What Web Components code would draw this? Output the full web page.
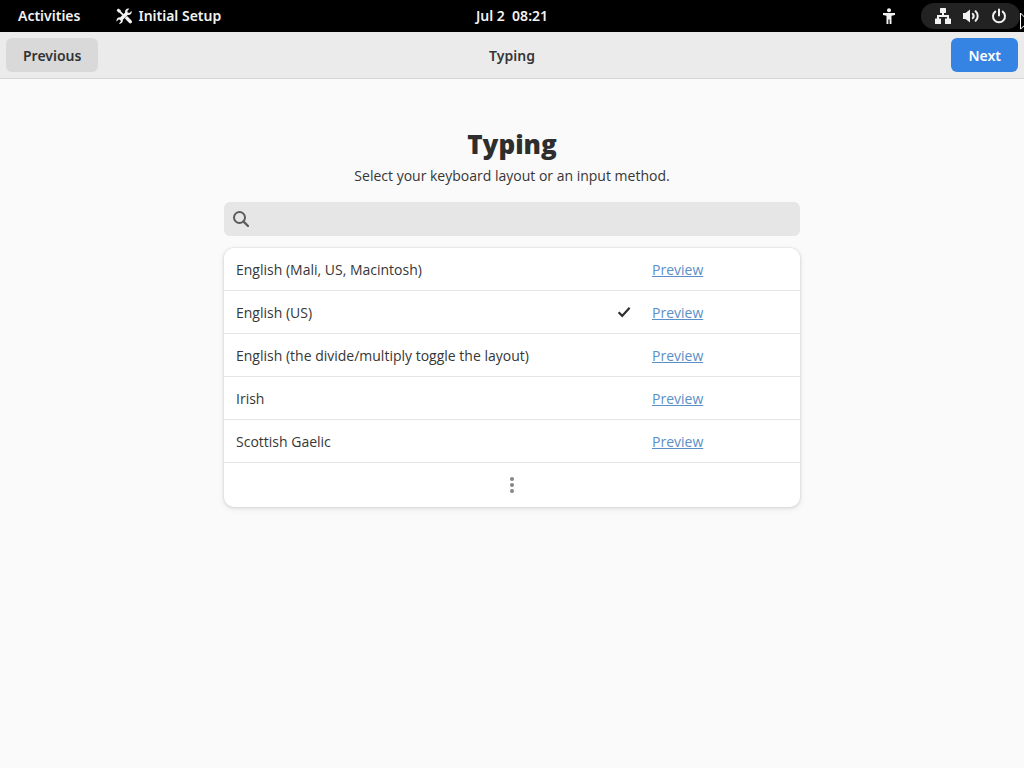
<!DOCTYPE html>
<html lang="en">
<head>
<meta charset="utf-8">
<meta name="viewport" content="width=device-width, initial-scale=1">
<title>Initial Setup</title>
<style>
  html, body { margin: 0; height: 100%; }
  body {
    background: #fafafa;
    color: #363636;
    font: 14px/20px "Open Sans", "Noto Sans", sans-serif;
    overflow: hidden;
  }
</style>
</head>
<body>
<setup-app></setup-app>

<template id="t-app">
  <style>
    :host { display: flex; flex-direction: column; min-height: 100%; }
    .lead { margin: 0 0 16px; text-align: center; }
    h1 { margin: 0 0 4px; font-size: 26px; line-height: 36px; font-weight: 800; text-align: center; color: #2e2e2e; }
    main { box-sizing: border-box; width: 100%; max-width: 608px; margin: 0 auto; padding: 47px 16px 24px; }
    layout-list { margin-top: 12px; }
  </style>
  <shell-bar></shell-bar>
  <window-header title-text="Typing">
    <push-button slot="start">Previous</push-button>
    <push-button slot="end" suggested>Next</push-button>
  </window-header>
  <main>
    <h1>Typing</h1>
    <p class="lead">Select your keyboard layout or an input method.</p>
    <search-field></search-field>
    <layout-list>
      <layout-row>English (Mali, US, Macintosh)</layout-row>
      <layout-row selected>English (US)</layout-row>
      <layout-row>English (the divide/multiply toggle the layout)</layout-row>
      <layout-row>Irish</layout-row>
      <layout-row>Scottish Gaelic</layout-row>
    </layout-list>
  </main>
  <mouse-pointer></mouse-pointer>
</template>

<template id="t-bar">
  <style>
    :host { display: grid; grid-template-columns: 1fr auto 1fr; align-items: center; height: 32px; background: #000; color: #f2f2f2; font-family: "Noto Sans", sans-serif; font-weight: 600; }
    button { font: inherit; color: inherit; background: none; border: 0; padding: 0; display: flex; align-items: center; }
    svg { display: block; fill: currentColor; }
    .left { display: flex; gap: 36px; padding-left: 18px; }
    .app { gap: 6px; }
    .clock { white-space: pre; }
    .right { display: flex; justify-content: flex-end; align-items: center; gap: 24px; padding-right: 4px; }
    .status { gap: 12px; height: 26px; padding: 0 13px 0 14px; border-radius: 13px; background: #222; }
  </style>
  <div class="left">
    <button>Activities</button>
    <button class="app">
      <svg width="16" height="16" viewBox="0 0 16 16" aria-hidden="true">
        <path d="M.6 2.2 2.2.6l2.4 1.5.4 1.4 3 3-1.3 1.3-3-3-1.4-.4z"/>
        <path d="M15.6 3.1 13.3 5l-1.6-.4L11.300 3l1.900-2.300C11 0 8.600 1.700 9.100 4.500L4.300 9.300C1.700 8.900 0 11.300.6 13.400l2.100-1.900 1.700.4.4 1.700-2 2.100c2.300.6 4.500-1.300 4-3.900l4.900-4.900c2.500.5 4.500-1.600 3.900-3.800z"/>
        <path d="m9.800 9 1.300-1.100 4.200 4.400c.9 1 .9 1.800.3 2.500-.8.9-1.800.8-2.600 0L8.700 10.300z"/>
      </svg>
      <span>Initial Setup</span>
    </button>
  </div>
  <button class="clock">Jul 2  08:21</button>
  <div class="right">
    <button aria-label="Accessibility">
      <svg width="16" height="16" viewBox="0 0 16 16"><circle cx="8" cy="2.200" r="2"/><path d="M2 5h12v2l-3.500.7V16H8.600v-4.500H7.400V16H5.500V7.700L2 7z"/></svg>
    </button>
    <button class="status" aria-label="System">
      <svg width="16" height="16" viewBox="0 0 16 16"><rect x="5" width="6" height="5" rx=".5"/><rect y="10.500" width="6" height="5.500" rx=".5"/><rect x="10" y="10.500" width="6" height="5.500" rx=".5"/><path d="M7 5h2v2h5v4h-2V9H4v2H2V7h5z"/></svg>
      <svg width="16" height="16" viewBox="0 0 16 16"><path d="M0 5h2.500L7 1.500v13L2.500 11H0z"/><g fill="none" stroke="currentColor" stroke-width="2" stroke-linecap="round"><path d="M9.800 5.800c1 1.200 1 3.200 0 4.400"/><path d="M12.600 3.200c2.800 2.600 2.800 7 0 9.600"/></g></svg>
      <svg width="16" height="16" viewBox="0 0 16 16"><g fill="none" stroke="currentColor" stroke-width="2" stroke-linecap="round"><path d="M8 1.500v6"/><path d="M4.300 3.600a6 6 0 1 0 7.400 0"/></g></svg>
    </button>
  </div>
</template>

<template id="t-header">
  <style>
    :host { display: grid; grid-template-columns: 1fr auto 1fr; align-items: center; height: 46px; padding: 0 6px; background: #ebebeb; border-bottom: 1px solid #d5d5d5; font-family: "Noto Sans", sans-serif; }
    .title { font-weight: 600; padding-top: 2px; }
    .end { display: flex; justify-content: flex-end; }
  </style>
  <div class="start"><slot name="start"></slot></div>
  <div class="title"></div>
  <div class="end"><slot name="end"></slot></div>
</template>

<template id="t-button">
  <style>
    :host { display: inline-block; vertical-align: top; }
    button { display: block; height: 34px; padding: 2px 17px 0; border: 0; border-radius: 6px; font: inherit; font-weight: 600; color: #333; background: #d9d9d9; }
    :host([suggested]) button { color: #fff; background: #3584e4; }
  </style>
  <button><slot></slot></button>
</template>

<template id="t-search">
  <style>
    :host { display: block; }
    label { display: flex; align-items: center; gap: 8px; height: 34px; padding: 0 9px; border-radius: 6px; background: #e6e6e6; color: #5c5c5c; }
    svg { flex: none; }
    input { flex: 1; min-width: 0; border: 0; padding: 0; outline: 0; background: none; font: inherit; color: #333; }
  </style>
  <label>
    <svg width="16" height="16" viewBox="0 0 16 16" fill="none" stroke="currentColor" stroke-width="2" aria-hidden="true"><circle cx="6.500" cy="6.500" r="5.500"/><path d="m10.500 10.500 4.500 4.500" stroke-width="2.400" stroke-linecap="round"/></svg>
    <input type="text" aria-label="Search keyboard layouts">
  </label>
</template>

<template id="t-list">
  <style>
    :host { display: block; border-radius: 10px; background: #fff; box-shadow: 0 0 0 1px rgba(0,0,0,.03), 0 1px 3px 1px rgba(0,0,0,.07), 0 2px 6px 2px rgba(0,0,0,.03); }
    .more { display: flex; align-items: center; justify-content: center; width: 100%; height: 44px; border: 0; padding: 0; background: none; color: #858585; }
  </style>
  <slot></slot>
  <button class="more" aria-label="More">
    <svg width="16" height="16" viewBox="0 0 16 16" fill="currentColor"><circle cx="8" cy="2" r="2"/><circle cx="8" cy="8" r="2"/><circle cx="8" cy="14" r="2"/></svg>
  </button>
</template>

<template id="t-row">
  <style>
    :host { display: grid; grid-template-columns: minmax(0, 1fr) 16px 136px; column-gap: 20px; align-items: center; height: 40px; padding: 2px 12px 0; border-bottom: 1px solid #e6e6e6; }
    svg { display: block; visibility: hidden; }
    :host([selected]) svg { visibility: visible; }
    a { color: #5b8fc7; }
  </style>
  <span><slot></slot></span>
  <svg width="16" height="16" viewBox="0 0 16 16" fill="none" stroke="#2e2e2e" stroke-width="2.200" aria-hidden="true"><path d="m2.600 7.300 3.600 3.600L13.600 2.800"/></svg>
  <div><a href="#preview">Preview</a></div>
</template>

<template id="t-pointer">
  <style>
    :host { position: fixed; top: 12px; right: 0; width: 4px; height: 20px; overflow: hidden; pointer-events: none; }
    svg { display: block; }
  </style>
  <svg width="14" height="20" viewBox="0 0 14 20" aria-hidden="true"><path d="M.5 1v16l4-3.500 3 6 2-1-2.500-5.500H12z" fill="#000" stroke="#fff"/></svg>
</template>

<script>
  const define = (name, id, setup) => customElements.define(name, class extends HTMLElement {
    constructor() {
      super();
      this.attachShadow({ mode: "open" }).append(document.getElementById(id).content.cloneNode(true));
    }
    connectedCallback() { if (setup) setup(this); }
  });
  define("push-button", "t-button");
  define("shell-bar", "t-bar");
  define("window-header", "t-header", el => {
    el.shadowRoot.querySelector(".title").textContent = el.getAttribute("title-text");
  });
  define("search-field", "t-search");
  define("layout-row", "t-row", el => {
    el.shadowRoot.querySelector("a").setAttribute("aria-label", "Preview " + el.textContent);
  });
  define("layout-list", "t-list");
  define("mouse-pointer", "t-pointer");
  define("setup-app", "t-app");
</script>
</body>
</html>
